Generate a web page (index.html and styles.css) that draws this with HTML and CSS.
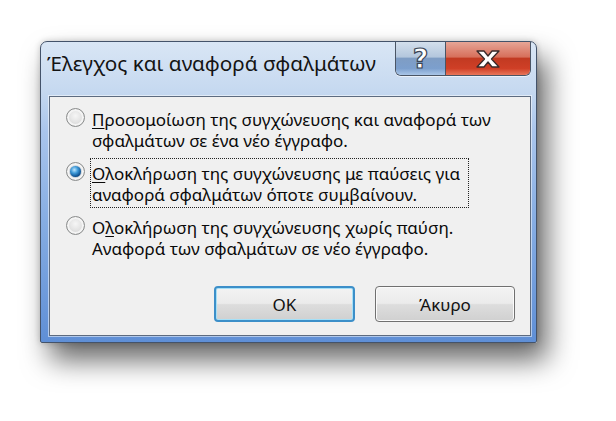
FILE: index.html
```html
<!DOCTYPE html>
<html lang="el">
<head>
<meta charset="utf-8">
<title>Έλεγχος και αναφορά σφαλμάτων</title>
<link rel="stylesheet" href="styles.css">
</head>
<body>
<div class="dialog">
  <div class="titlebar">
    <div class="title">Έλεγχος και αναφορά σφαλμάτων</div>
    <div class="caption">
      <div class="cap-help">?</div>
      <div class="cap-close">
        <svg width="28" height="20" viewBox="0 0 28 20">
          <path d="M3 2 L10 2 L14 7 L18 2 L25 2 L17.5 10 L25 18 L18 18 L14 13 L10 18 L3 18 L10.5 10 Z" fill="#fff" stroke="#3a2a2a" stroke-width="1.3" stroke-linejoin="round"/>
        </svg>
      </div>
    </div>
  </div>
  <div class="client">
    <div class="options">
      <div class="option">
        <span class="radio"></span>
        <span class="label"><u>Π</u>ροσομοίωση της συγχώνευσης και αναφορά των<br>σφαλμάτων σε ένα νέο έγγραφο.</span>
      </div>
      <div class="option">
        <span class="radio checked"></span>
        <span class="label focus"><u>Ο</u>λοκλήρωση της συγχώνευσης με παύσεις για<br>αναφορά σφαλμάτων όποτε συμβαίνουν.</span>
      </div>
      <div class="option">
        <span class="radio"></span>
        <span class="label">Ο<u>λ</u>οκλήρωση της συγχώνευσης χωρίς παύση.<br>Αναφορά των σφαλμάτων σε νέο έγγραφο.</span>
      </div>
    </div>
    <div class="buttons">
      <div class="btn default">OK</div>
      <div class="btn">Άκυρο</div>
    </div>
  </div>
</div>
</body>
</html>
```
FILE: styles.css
```css
html, body {
  margin: 0;
  padding: 0;
  background: #ffffff;
}
body {
  width: 616px;
  height: 421px;
  overflow: hidden;
  padding: 41px 0 0 40px;
  box-sizing: border-box;
  font-family: "Noto Sans", "Open Sans", sans-serif;
}
.dialog {
  width: 497px;
  height: 302px;
  box-sizing: border-box;
  padding: 0 5px 6px 8px;
  display: flex;
  flex-direction: column;
  border: 1px solid #44536a;
  border-radius: 7px 7px 2px 2px;
  background: linear-gradient(to bottom, #d9e6f5 0%, #c6d9f0 16%, #a9c5ec 30%, #86ade3 60%, #5f8fd6 100%);
  box-shadow: 0 0 6px rgba(0,0,0,0.2), 10px 17px 28px rgba(0,0,0,0.6);
}
.titlebar {
  height: 54px;
  display: flex;
  justify-content: space-between;
  align-items: flex-start;
  margin-left: -2px;
}
.title {
  padding: 8px 0 0 0;
  font-size: 20.7px;
  line-height: 26px;
  color: #141414;
  white-space: nowrap;
}
.caption {
  display: flex;
  height: 33px;
  border: 1px solid #4a5565;
  border-top: none;
  border-radius: 0 0 6px 6px;
  overflow: hidden;
  box-shadow: 0 1px 0 rgba(255,255,255,0.6);
}
.cap-help {
  width: 49px;
  display: flex;
  align-items: center;
  justify-content: center;
  font-family: "DejaVu Sans", sans-serif;
  font-weight: bold;
  font-size: 27px;
  color: #ffffff;
  -webkit-text-stroke: 1.2px #3b4656;
  background: linear-gradient(to bottom, #d3dfec 0%, #b4c7dd 45%, #7f9dc4 50%, #7c9fcd 80%, #a9c6e8 100%);
  border-right: 1px solid #4a5565;
}
.cap-close {
  width: 84px;
  display: flex;
  align-items: center;
  justify-content: center;
  background: linear-gradient(to bottom, #e7a596 0%, #d7705c 45%, #c23a22 50%, #cf3f26 80%, #e8765a 100%);
}
.client {
  flex: 1;
  display: flex;
  flex-direction: column;
  background: #f0f0f0;
  border: 1px solid #5d6b80;
  box-shadow: 0 0 0 1px rgba(255,255,255,0.5);
}
.options {
  display: flex;
  flex-direction: column;
  gap: 4px;
  padding: 7px 0 0 16px;
}
.option {
  display: flex;
  align-items: flex-start;
  gap: 5px;
}
.radio {
  flex: none;
  width: 19px;
  height: 19px;
  margin-top: 4px;
  box-sizing: border-box;
  border-radius: 50%;
  border: 1px solid #8a8c8c;
  background: radial-gradient(circle at 50% 40%, #f6f6f6 0%, #e4e4e4 45%, #cbcbcb 100%);
  box-shadow: inset 0 0 0 2px #f4f4f4;
  display: flex;
  align-items: center;
  justify-content: center;
}
.radio.checked::after {
  content: "";
  width: 11px;
  height: 11px;
  border-radius: 50%;
  background: radial-gradient(circle at 40% 35%, #bfe6ff 0%, #3e9ad8 35%, #0d4f8e 70%, #062d57 100%);
  box-shadow: 0 0 1px #1b5d9a;
}
.label {
  font-size: 17px;
  line-height: 21px;
  color: #0a0a0a;
  padding: 4px 8px 2px 1px;
  border: 1px dotted transparent;
  white-space: nowrap;
}
.label.focus {
  border-color: #222;
}
.label u {
  text-decoration-thickness: 1px;
  text-underline-offset: 2px;
}
.buttons {
  margin-top: auto;
  display: flex;
  justify-content: flex-end;
  gap: 20px;
  padding: 0 15px 13px 0;
}
.btn {
  width: 140px;
  height: 36px;
  box-sizing: border-box;
  display: flex;
  align-items: center;
  justify-content: center;
  font-size: 17px;
  color: #111;
  border: 1px solid #707070;
  border-radius: 4px;
  background: linear-gradient(to bottom, #f3f3f3 0%, #ebebeb 48%, #dddddd 52%, #d0d0d0 100%);
  box-shadow: inset 0 0 0 1px #fbfbfb;
}
.btn.default {
  width: 141px;
  border: 2px solid #3c8fc9;
  box-shadow: inset 0 0 0 1px #a6e0f7;
}
```
